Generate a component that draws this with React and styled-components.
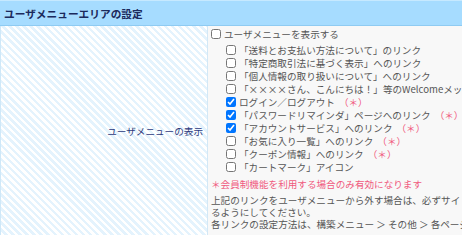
import React from 'react';
import styled, { createGlobalStyle } from 'styled-components';

const GlobalStyle = createGlobalStyle`
    html, body {
        margin: 0;
        padding: 0;
        overflow: hidden;
        background: #ffffff;
    }
    body {
        font-family: "Noto Sans CJK JP", "Noto Sans", sans-serif;
    }
`;

const subItems = [
    { label: '「送料とお支払い方法について」のリンク', checked: false, member: false },
    { label: '「特定商取引法に基づく表示」へのリンク', checked: false, member: false },
    { label: '「個人情報の取り扱いについて」へのリンク', checked: false, member: false },
    { label: '「××××さん、こんにちは！」等のWelcomeメッセージ', checked: false, member: false },
    { label: 'ログイン／ログアウト', checked: true, member: true },
    { label: '「パスワードリマインダ」ページへのリンク', checked: true, member: true },
    { label: '「アカウントサービス」へのリンク', checked: true, member: true },
    { label: '「お気に入り一覧」へのリンク', checked: false, member: true },
    { label: '「クーポン情報」へのリンク', checked: false, member: true },
    { label: '「カートマーク」アイコン', checked: false, member: false },
];

const App = () => {
    return (
        <Wrapper>
            <GlobalStyle />
            <SectionHeader>ユーザメニューエリアの設定</SectionHeader>
            <SettingRow>
                <LabelCell>ユーザメニューの表示</LabelCell>
                <ValueCell>
                    <CheckRow>
                        <Check type="checkbox" defaultChecked={false} />
                        ユーザメニューを表示する
                    </CheckRow>
                    <SubList>
                        {subItems.map((item, index) => (
                            <CheckRow key={index} $sub>
                                <Check type="checkbox" defaultChecked={item.checked} />
                                {item.label}
                                {item.member && <Mark>（＊）</Mark>}
                            </CheckRow>
                        ))}
                    </SubList>
                    <Note>＊会員制機能を利用する場合のみ有効になります</Note>
                    <Help>
                        <HelpLine>上記のリンクをユーザメニューから外す場合は、必ずサイト内の別の場所にリンクを設置し、ページにアクセスでき</HelpLine>
                        <HelpLine>るようにしてください。</HelpLine>
                        <HelpLine>各リンクの設定方法は、構築メニュー ＞ その他 ＞ 各ページ設定 をご覧ください。</HelpLine>
                    </Help>
                </ValueCell>
            </SettingRow>
        </Wrapper>
    );
};

export default App;

const Wrapper = styled.section`
    display: flex;
    flex-direction: column;
    width: 720px;
`;
const SectionHeader = styled.h2`
    margin: 0;
    height: 24px;
    display: flex;
    align-items: center;
    padding: 0 4px;
    border-top: 1px solid #c6e9ff;
    border-bottom: 1px solid #8fcbf2;
    background-color: #a6dcff;
    color: #1b2a5c;
    font-size: 10.7px;
    font-weight: bold;
    letter-spacing: 0;
`;
const SettingRow = styled.div`
    display: grid;
    grid-template-columns: 208px 1fr;
`;
const LabelCell = styled.div`
    display: flex;
    justify-content: flex-end;
    align-items: center;
    padding-right: 4px;
    border-left: 1px solid #cfe8f8;
    border-right: 1px solid #d3e8f6;
    background: repeating-linear-gradient(
        45deg,
        #ffffff 0px,
        #ffffff 2.5px,
        #e4f3fd 2.5px,
        #e4f3fd 5px
    );
    color: #2d3a7c;
    font-size: 9.6px;
`;
const ValueCell = styled.div`
    display: flex;
    flex-direction: column;
    padding: 1px 0 5px 3px;
    background-color: #f8f8f8;
    color: #555555;
    font-size: 9.6px;
`;
const SubList = styled.div`
    display: flex;
    flex-direction: column;
    margin-top: 3px;
`;
const CheckRow = styled.label`
    display: flex;
    align-items: center;
    height: 13px;
    padding-left: ${(p) => (p.$sub ? '15px' : '0')};
    white-space: nowrap;
`;
const Check = styled.input`
    width: 10px;
    height: 10px;
    margin: 0 3px 0 0;
    accent-color: #0075ff;
    flex-shrink: 0;
`;
const Mark = styled.span`
    margin-left: 4px;
    color: #f05a7e;
`;
const Note = styled.div`
    margin-top: 5px;
    height: 13px;
    line-height: 13px;
    color: #f05a7e;
    white-space: nowrap;
`;
const Help = styled.div`
    display: flex;
    flex-direction: column;
    margin-top: 3px;
    line-height: 12px;
`;
const HelpLine = styled.span`
    white-space: nowrap;
`;
